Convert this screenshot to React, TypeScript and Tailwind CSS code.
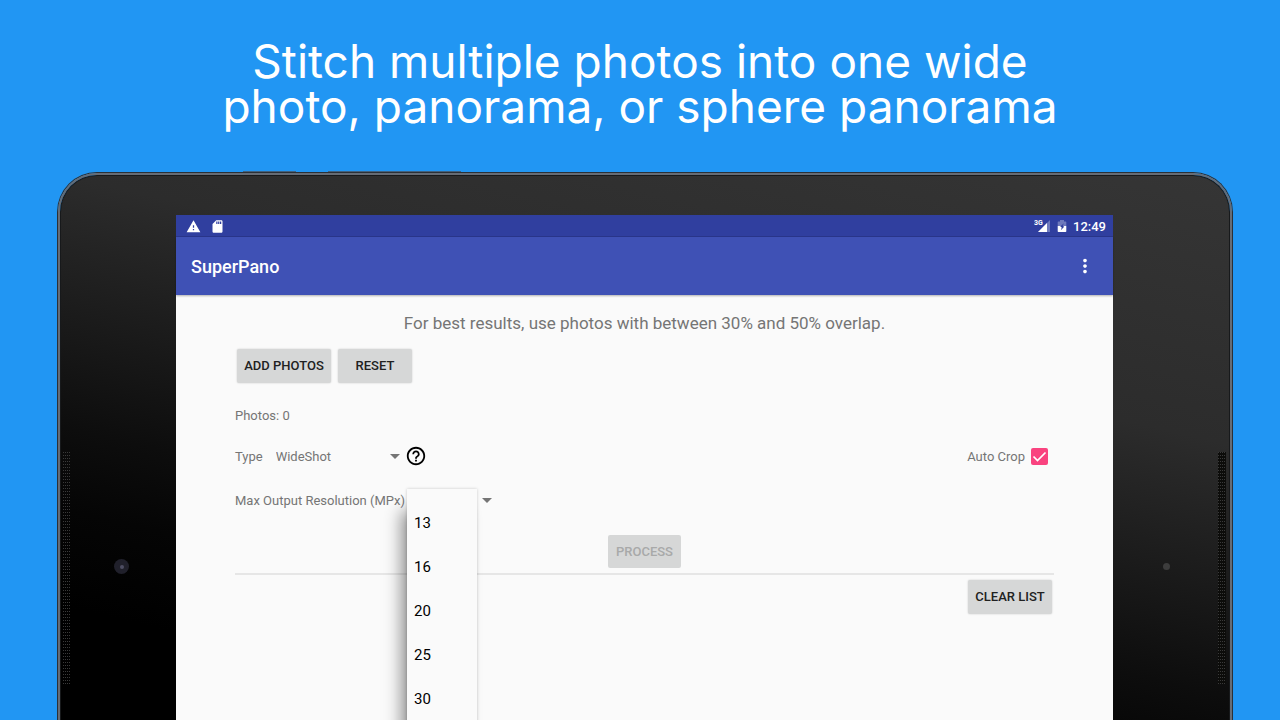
import React from "react";
import { MdWarning, MdSdCard, MdHelpOutline, MdMoreVert } from "react-icons/md";

const resolutions = ["13", "16", "20", "25", "30"];

function Caret() {
  return (
    <svg viewBox="0 0 10 5" className="pointer-events-none absolute right-0 h-[5px] w-2.5" aria-hidden="true">
      <path d="M0 0h10L5 5z" fill="#757575" />
    </svg>
  );
}

function SignalIcon() {
  return (
    <svg viewBox="0 0 17 14" className="h-3.5 w-[17px]" aria-hidden="true">
      <path d="M16 1v12H4z" fill="#fff" fillOpacity="0.3" />
      <path d="M13 4v9H4z" fill="#fff" />
      <text x="0" y="6" fill="#fff" fontSize="7" fontWeight="700" fontFamily="Roboto, sans-serif">
        3G
      </text>
    </svg>
  );
}

function BatteryIcon() {
  return (
    <svg viewBox="0 0 10 14" className="h-3.5 w-2.5" aria-hidden="true">
      <path d="M3 1h4v1.4h1.6c.4 0 .7.3.7.7V7H.7V3.1c0-.4.3-.7.7-.7H3z" fill="#fff" fillOpacity="0.3" />
      <path d="M.7 7h8.6v5.3c0 .4-.3.7-.7.7H1.4c-.4 0-.7-.3-.7-.7z" fill="#fff" />
      <path d="M7 4.200L3.200 7.600l1.600 1-1 2.600L7.200 7.800l-1.600-1z" fill="#303f9f" />
    </svg>
  );
}

function RaisedButton({ className = "", children }: { className?: string; children: React.ReactNode }) {
  return (
    <button
      type="button"
      className={`h-[34px] rounded-xs bg-[#d6d7d7] text-[13px] leading-4 font-medium whitespace-nowrap text-[#212121] shadow-[0_0_2px_rgba(0,0,0,0.2)] ${className}`}
    >
      {children}
    </button>
  );
}

function Speaker({ className = "" }: { className?: string }) {
  return (
    <svg className={`h-[232px] w-2 ${className}`} aria-hidden="true">
      <defs>
        <pattern id="grille" width="2" height="3" patternUnits="userSpaceOnUse">
          <rect width="1" height="1" fill="#3a3a3a" />
        </pattern>
      </defs>
      <rect width="8" height="232" fill="url(#grille)" />
    </svg>
  );
}

function StatusBar() {
  return (
    <div className="flex h-[22px] items-center bg-[#303f9f] px-[7px] pl-2.5 text-white shadow-[inset_0_-1px_0_#2a378c]">
      <MdWarning className="size-[15px]" />
      <MdSdCard className="ml-[9px] size-[15px]" />
      <div className="ml-auto flex items-center">
        <SignalIcon />
        <span className="ml-1.5 flex">
          <BatteryIcon />
        </span>
        <span className="ml-1.5 pt-0.5 text-[13px] leading-4 font-medium">12:49</span>
      </div>
    </div>
  );
}

function AppBar() {
  return (
    <header className="relative flex h-[58px] items-center justify-between bg-[#3f51b5] pr-[17px] pl-[15px] text-white shadow-[0_1px_2px_rgba(0,0,0,0.3)]">
      <h2 className="pt-0.5 text-[18px] leading-6 font-medium">SuperPano</h2>
      <button type="button" aria-label="More options">
        <MdMoreVert className="size-[22px]" />
      </button>
    </header>
  );
}

function PanoForm() {
  return (
    <main className="flex flex-1 flex-col bg-[#fafafa] px-[59px] text-[13px] leading-4 text-[#757575]">
      <p className="flex h-[54px] items-center justify-center pt-0.5 text-[17px] leading-6">
        For best results, use photos with between 30% and 50% overlap.
      </p>

      <div className="flex gap-[7px] px-0.5">
        <RaisedButton className="w-[94px]">ADD PHOTOS</RaisedButton>
        <RaisedButton className="w-[74px]">RESET</RaisedButton>
      </div>

      <p className="mt-[25px] mb-2.5">Photos: 0</p>

      <div className="flex h-11 items-center">
        <label htmlFor="type" className="pt-0.5">
          Type
        </label>
        <div className="relative ml-[13px] flex w-[124px] items-center">
          <select id="type" className="w-full appearance-none bg-transparent pt-0.5" defaultValue="WideShot">
            <option>WideShot</option>
            <option>Panorama</option>
            <option>Sphere</option>
          </select>
          <Caret />
        </div>
        <button type="button" aria-label="Help" className="ml-[5px] text-black">
          <MdHelpOutline className="size-[22px]" />
        </button>
        <div className="ml-auto flex items-center gap-1.5 pr-1.5">
          <label htmlFor="crop" className="pt-0.5">
            Auto Crop
          </label>
          <span className="relative flex">
            <input id="crop" type="checkbox" defaultChecked className="size-[17px] appearance-none rounded-xs bg-[#f9437f]" />
            <svg viewBox="0 0 17 17" className="pointer-events-none absolute inset-0 size-[17px]" aria-hidden="true">
              <path d="M2.500 8.500l4 4 8-8" fill="none" stroke="#fff" strokeWidth="1.700" />
            </svg>
          </span>
        </div>
      </div>

      <div className="flex h-11 items-center">
        <label htmlFor="resolution" className="pt-0.5">
          Max Output Resolution (MPx)
        </label>
        <div className="relative ml-0.5 flex w-[85px] items-center">
          <select id="resolution" className="w-full appearance-none bg-transparent pt-0.5 pl-2" defaultValue="13">
            {resolutions.map((r) => (
              <option key={r}>{r}</option>
            ))}
          </select>
          <Caret />
          <ul
            role="listbox"
            aria-label="Max Output Resolution"
            className="absolute -top-0.5 left-0 w-[70px] bg-[#fafafa] pt-3 pb-11 text-[15px] leading-5 text-black shadow-[0_0_3px_rgba(0,0,0,0.2),-9px_18px_16px_-4px_rgba(0,0,0,0.45)]"
          >
            {resolutions.map((r) => (
              <li key={r} role="option" aria-selected={r === "13"} className="flex h-11 items-center px-[7px]">
                {r}
              </li>
            ))}
          </ul>
        </div>
      </div>

      <button
        type="button"
        disabled
        className="mt-[13px] h-[33px] self-center rounded-xs bg-[#d6d7d7] px-2 font-medium text-[#a8a9a9]"
      >
        PROCESS
      </button>
      <hr className="mt-[5px] h-0.5 border-0 bg-[#e6e6e6]" />
      <RaisedButton className="mt-[5px] mr-0.5 w-[84px] self-end">CLEAR LIST</RaisedButton>
    </main>
  );
}

export default function App() {
  return (
    <div className="flex h-screen flex-col overflow-hidden bg-[#2196f3] pr-[47px] pl-[57px] font-[Roboto,sans-serif]">
      <h1 className="mr-2.5 pt-[39px] pb-[42px] text-center font-[Inter,sans-serif] text-[46px] leading-[45px] text-white">
        Stitch multiple photos into one wide
        <br />
        photo, panorama, or sphere panorama
      </h1>

      <div className="flex h-px shrink-0 gap-8 pl-[186px]">
        <div className="w-[53px] bg-[#40617f]" />
        <div className="w-[133px] bg-[#40617f]" />
      </div>

      <div className="flex flex-1 rounded-t-[40px] border border-b-0 border-[#2b3036]">
        <div className="flex flex-1 rounded-t-[39px] border-2 border-b-0 border-[#666c75]">
          <div className="flex flex-1 rounded-t-[37px] border border-b-0 border-[#17191b] bg-[linear-gradient(193deg,#353535_0%,#2c2c2c_33%,#0d0d0d_64%,#050505_74%,#000_86%)] pt-[39px]">
            <div className="flex w-[115px] shrink-0 items-start pt-[237px] pl-0.5">
              <Speaker />
              <div className="mt-[107px] ml-[43px] flex size-[15px] items-center justify-center rounded-full bg-[#20202b]">
                <div className="size-1 rounded-full bg-[#4d4d63]" />
              </div>
            </div>
            <div className="flex min-w-0 flex-1 flex-col">
              <StatusBar />
              <AppBar />
              <PanoForm />
            </div>
            <div className="flex w-[116px] shrink-0 items-start justify-end pt-[237px] pr-[3px]">
              <div className="mt-[111px] mr-[48px] size-[7px] rounded-full bg-[#3d3d3d]" />
              <Speaker className="bg-[#0c0c0a]" />
            </div>
          </div>
        </div>
      </div>
    </div>
  );
}
